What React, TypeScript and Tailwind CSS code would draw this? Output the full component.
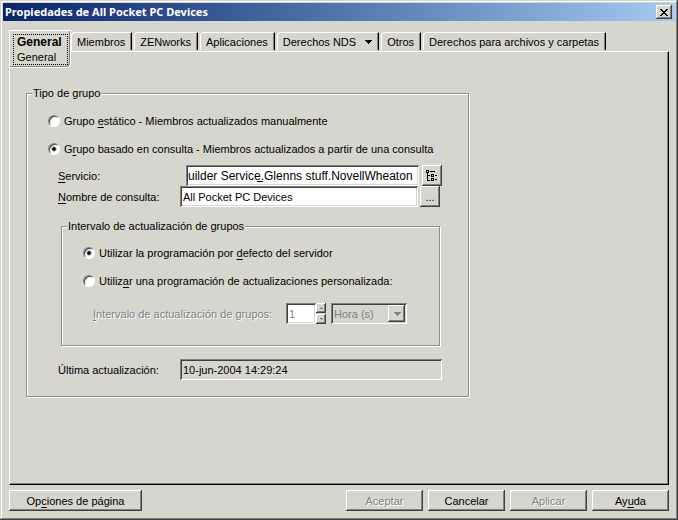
import { useState } from 'react'
import type { InputHTMLAttributes, ReactNode } from 'react'
import clsx from 'clsx'

const raised = 'bg-[#d6d6ce] shadow-[inset_-1px_-1px_#404040,inset_1px_1px_#fff,inset_-2px_-2px_#808080]'
const sunken = 'shadow-[inset_1px_1px_#808080,inset_-1px_-1px_#fff,inset_2px_2px_#404040,inset_-2px_-2px_#d6d6ce]'
const etched = 'border border-[#90908a] shadow-[1px_1px_#fff,inset_1px_1px_#fff]'
const disabledText = 'disabled:text-[#808080] disabled:[text-shadow:1px_1px_#fff]'

const TABS = [
  { id: 'miembros', label: 'Miembros' },
  { id: 'zenworks', label: 'ZENworks' },
  { id: 'aplicaciones', label: 'Aplicaciones' },
  { id: 'nds', label: 'Derechos NDS', menu: true },
  { id: 'otros', label: 'Otros' },
  { id: 'archivos', label: 'Derechos para archivos y carpetas' },
]

// Access key letter
function Key({ children }: { children: ReactNode }) {
  return <u className="underline decoration-1 underline-offset-2">{children}</u>
}

function Arrow({ up = false, className }: { up?: boolean; className?: string }) {
  return (
    <svg viewBox="0 0 8 4" className={clsx('fill-current', up && 'rotate-180', className)} shapeRendering="crispEdges" aria-hidden="true">
      <path d="M0 0h8L4 4z" />
    </svg>
  )
}

function Radio({ children, ...props }: InputHTMLAttributes<HTMLInputElement> & { children: ReactNode }) {
  return (
    <label className="flex h-4 items-center gap-1 whitespace-nowrap">
      <input
        type="radio"
        className="size-3 shrink-0 appearance-none rounded-full border border-t-[#808080] border-r-white border-b-white border-l-[#808080] bg-white shadow-[inset_1px_1px_#404040] checked:bg-[radial-gradient(circle,#000_1px,#fff_3px)]"
        {...props}
      />
      <span>{children}</span>
    </label>
  )
}

function PushButton({ children, disabled, className }: { children: ReactNode; disabled?: boolean; className: string }) {
  return (
    <button type="button" disabled={disabled} className={clsx('h-[21px] pt-px', raised, disabledText, className)}>
      {children}
    </button>
  )
}

export default function App() {
  const [mode, setMode] = useState('consulta')
  const [schedule, setSchedule] = useState('defecto')

  return (
    <div className="flex min-h-screen flex-col bg-[#d6d6ce] p-[3px] font-['Liberation_Sans',Arial,sans-serif] text-[11px] leading-4 text-black shadow-[inset_-1px_-1px_#404040,inset_1px_1px_#d6d6ce,inset_-2px_-2px_#808080,inset_2px_2px_#fff]">
      <header className="flex h-[18px] items-center justify-between bg-linear-to-r from-[#0a246a] to-[#a6caf0] pr-[3px] pl-[2px]">
        <h1 className="font-['Noto_Sans',sans-serif] text-[11px] font-bold text-white">Propiedades de All Pocket PC Devices</h1>
        <button type="button" aria-label="Cerrar" className={clsx('flex h-[14px] w-4 items-center justify-center', raised)}>
          <svg viewBox="0 0 8 7" className="h-[7px] w-2" shapeRendering="crispEdges" aria-hidden="true">
            <path d="M0 0h2v1h1v1h2V1h1V0h2v1H7v1H6v1H5v1h1v1h1v1h1v1H6V6H5V5H3v1H2v1H0V6h1V5h1V4h1V3H2V2H1V1H0z" />
          </svg>
        </button>
      </header>

      <div className="flex flex-1 flex-col px-[6px] pt-[9px] pb-[6px]">
        {/* Tabs; the active one hangs over the page's top edge */}
        <nav role="tablist" className="flex h-[21px] items-start">
          <button
            type="button"
            role="tab"
            aria-selected="true"
            className="relative z-10 h-[38px] w-[62px] rounded-br-sm border-t border-l border-white bg-[#d6d6ce] p-[3px] shadow-[inset_-1px_-1px_#fff,inset_-2px_-2px_#808080]"
          >
            <span className="flex h-full flex-col justify-center border border-dotted border-black pl-[3px] text-left leading-[15px]">
              <b className="text-xs leading-[15px]">General</b>
              <span>General</span>
            </span>
          </button>
          {TABS.map(tab => (
            <button
              key={tab.id}
              type="button"
              role="tab"
              aria-selected="false"
              className="mt-[2px] mr-[2px] flex h-[18px] items-center gap-2 rounded-tl-sm border-t border-r border-l border-t-white border-r-black border-l-white pr-[6px] pl-[5px] whitespace-nowrap shadow-[inset_-1px_0_#808080]"
            >
              {tab.label}
              {tab.menu && <Arrow className="h-1 w-2" />}
            </button>
          ))}
        </nav>

        <main className="flex-1 border border-t-white border-r-black border-b-black border-l-white pt-[33px] pl-4 shadow-[inset_-1px_-1px_#808080]">
          <fieldset className={clsx('w-[443px] pr-[26px] pb-4 pl-[21px]', etched)}>
            <legend className="-ml-4 bg-[#d6d6ce] px-px">Tipo de grupo</legend>

            <div className="flex flex-col gap-3 pt-3">
              <Radio name="modo" checked={mode === 'estatico'} onChange={() => setMode('estatico')}>
                Grupo <Key>e</Key>stático - Miembros actualizados manualmente
              </Radio>
              <Radio name="modo" checked={mode === 'consulta'} onChange={() => setMode('consulta')}>
                G<Key>r</Key>upo basado en consulta - Miembros actualizados a partir de una consulta
              </Radio>
            </div>

            <div className="mt-2 pl-[10px]">
              <div className="flex h-[21px] items-center">
                <label htmlFor="servicio" className="w-32 shrink-0"><Key>S</Key>ervicio:</label>
                <div className="relative min-w-0 flex-1">
                  <input id="servicio" defaultValue="uilder Service.Glenns stuff.NovellWheaton" className={clsx('block h-[21px] w-full bg-white px-[2px] text-xs', sunken)} />
                  <span className="absolute bottom-1 left-[71px] h-px w-[6px] bg-black" />
                </div>
                <button type="button" aria-label="Examinar servicios" className={clsx('ml-[3px] flex h-[21px] w-5 items-center justify-center', raised)}>
                  <svg viewBox="0 0 12 13" className="h-[13px] w-3 fill-none stroke-black" shapeRendering="crispEdges" aria-hidden="true">
                    <path d="M.5 1.5h2v2h-2zM4 2.5h5M1.5 4v8M2 6.5h2M2 11.5h2M5.5 5.5h2v2h-2zM5.5 9.5h2v2h-2zM9 6.5h2M9 10.5h2" />
                  </svg>
                </button>
              </div>
              <div className="mr-[2px] flex h-[21px] items-center">
                <label htmlFor="consulta" className="w-[122px] shrink-0"><Key>N</Key>ombre de consulta:</label>
                <input id="consulta" defaultValue="All Pocket PC Devices" className={clsx('h-[21px] min-w-0 flex-1 bg-white px-[3px]', sunken)} />
                <button type="button" aria-label="Examinar consultas" className={clsx('ml-[2px] h-[21px] w-5', raised)}>...</button>
              </div>
            </div>

            <fieldset className={clsx('mt-[11px] ml-[13px] w-[379px] pb-[21px] pl-[21px]', etched)}>
              <legend className="-ml-4 bg-[#d6d6ce] px-px">Intervalo de actualización de grupos</legend>
              <div className="flex flex-col gap-3 pt-[11px]">
                <Radio name="programacion" checked={schedule === 'defecto'} onChange={() => setSchedule('defecto')}>
                  Utilizar la programación por <Key>d</Key>efecto del servidor
                </Radio>
                <Radio name="programacion" checked={schedule === 'personalizada'} onChange={() => setSchedule('personalizada')}>
                  Utiliz<Key>a</Key>r una programación de actualizaciones personalizada:
                </Radio>
              </div>
              <div className="mt-[14px] flex h-[21px] items-center pl-[10px]">
                <label htmlFor="intervalo" className="w-[193px] shrink-0 text-[#808080] [text-shadow:1px_1px_#fff]">
                  <Key>I</Key>ntervalo de actualización de grupos:
                </label>
                <input id="intervalo" disabled defaultValue="1" className={clsx('h-[21px] w-[30px] bg-white px-[3px] text-[#808080]', sunken)} />
                <div className="flex flex-col">
                  <button type="button" disabled aria-label="Aumentar" className={clsx('flex h-[10px] w-[10px] items-center justify-center text-[#808080]', raised)}>
                    <Arrow up className="h-[2px] w-1" />
                  </button>
                  <button type="button" disabled aria-label="Reducir" className={clsx('mt-px flex h-[10px] w-[10px] items-center justify-center text-[#808080]', raised)}>
                    <Arrow className="h-[2px] w-1" />
                  </button>
                </div>
                <div className="relative ml-[5px]">
                  <select disabled aria-label="Unidad de tiempo" className={clsx('block h-[21px] w-[76px] appearance-none pl-[3px] text-[11px] text-[#808080] opacity-100', sunken)}>
                    <option>Hora (s)</option>
                  </select>
                  <span className={clsx('pointer-events-none absolute top-[2px] right-[2px] flex h-[17px] w-[17px] items-center justify-center text-[#808080]', raised)}>
                    <Arrow className="h-1 w-2" />
                  </span>
                </div>
              </div>
            </fieldset>

            <div className="mt-[13px] flex h-[21px] items-center pl-[10px]">
              <label htmlFor="ultima" className="w-[122px] shrink-0">Última actualización:</label>
              <input
                id="ultima"
                readOnly
                value="10-jun-2004 14:29:24"
                className="h-[21px] min-w-0 flex-1 px-[3px] shadow-[inset_1px_1px_#808080,inset_-1px_-1px_#fff,inset_2px_2px_#404040]"
              />
            </div>
          </fieldset>
        </main>

        <footer className="mt-[5px] flex justify-between">
          <PushButton className="w-[133px]">Op<Key>c</Key>iones de página</PushButton>
          <div className="flex gap-[5px]">
            <PushButton disabled className="w-[77px]">Aceptar</PushButton>
            <PushButton className="w-[77px]">Cancelar</PushButton>
            <PushButton disabled className="w-[77px]">Aplicar</PushButton>
            <PushButton className="w-[77px]">Ay<Key>u</Key>da</PushButton>
          </div>
        </footer>
      </div>
    </div>
  )
}
